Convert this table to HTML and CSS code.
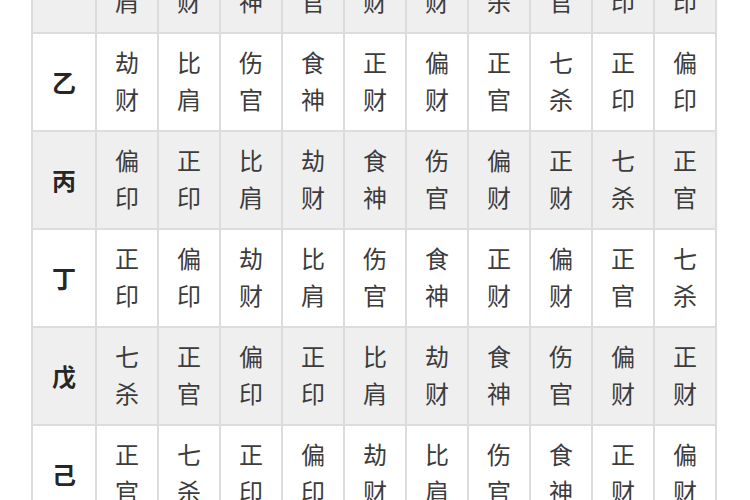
FILE: index.html
```html
<!DOCTYPE html>
<html lang="zh-CN">
<head>
<meta charset="utf-8">
<title>十神表</title>
<link rel="stylesheet" href="styles.css">
</head>
<body>
<div class="page">
  <div class="grid">
    <div class="cell stem shade">甲</div>
    <div class="cell shade"><span>比</span><span>肩</span></div>
    <div class="cell shade"><span>劫</span><span>财</span></div>
    <div class="cell shade"><span>食</span><span>神</span></div>
    <div class="cell shade"><span>伤</span><span>官</span></div>
    <div class="cell shade"><span>偏</span><span>财</span></div>
    <div class="cell shade"><span>正</span><span>财</span></div>
    <div class="cell shade"><span>七</span><span>杀</span></div>
    <div class="cell shade"><span>正</span><span>官</span></div>
    <div class="cell shade"><span>偏</span><span>印</span></div>
    <div class="cell shade"><span>正</span><span>印</span></div>

    <div class="cell stem">乙</div>
    <div class="cell"><span>劫</span><span>财</span></div>
    <div class="cell"><span>比</span><span>肩</span></div>
    <div class="cell"><span>伤</span><span>官</span></div>
    <div class="cell"><span>食</span><span>神</span></div>
    <div class="cell"><span>正</span><span>财</span></div>
    <div class="cell"><span>偏</span><span>财</span></div>
    <div class="cell"><span>正</span><span>官</span></div>
    <div class="cell"><span>七</span><span>杀</span></div>
    <div class="cell"><span>正</span><span>印</span></div>
    <div class="cell"><span>偏</span><span>印</span></div>

    <div class="cell stem shade">丙</div>
    <div class="cell shade"><span>偏</span><span>印</span></div>
    <div class="cell shade"><span>正</span><span>印</span></div>
    <div class="cell shade"><span>比</span><span>肩</span></div>
    <div class="cell shade"><span>劫</span><span>财</span></div>
    <div class="cell shade"><span>食</span><span>神</span></div>
    <div class="cell shade"><span>伤</span><span>官</span></div>
    <div class="cell shade"><span>偏</span><span>财</span></div>
    <div class="cell shade"><span>正</span><span>财</span></div>
    <div class="cell shade"><span>七</span><span>杀</span></div>
    <div class="cell shade"><span>正</span><span>官</span></div>

    <div class="cell stem">丁</div>
    <div class="cell"><span>正</span><span>印</span></div>
    <div class="cell"><span>偏</span><span>印</span></div>
    <div class="cell"><span>劫</span><span>财</span></div>
    <div class="cell"><span>比</span><span>肩</span></div>
    <div class="cell"><span>伤</span><span>官</span></div>
    <div class="cell"><span>食</span><span>神</span></div>
    <div class="cell"><span>正</span><span>财</span></div>
    <div class="cell"><span>偏</span><span>财</span></div>
    <div class="cell"><span>正</span><span>官</span></div>
    <div class="cell"><span>七</span><span>杀</span></div>

    <div class="cell stem shade">戊</div>
    <div class="cell shade"><span>七</span><span>杀</span></div>
    <div class="cell shade"><span>正</span><span>官</span></div>
    <div class="cell shade"><span>偏</span><span>印</span></div>
    <div class="cell shade"><span>正</span><span>印</span></div>
    <div class="cell shade"><span>比</span><span>肩</span></div>
    <div class="cell shade"><span>劫</span><span>财</span></div>
    <div class="cell shade"><span>食</span><span>神</span></div>
    <div class="cell shade"><span>伤</span><span>官</span></div>
    <div class="cell shade"><span>偏</span><span>财</span></div>
    <div class="cell shade"><span>正</span><span>财</span></div>

    <div class="cell stem">己</div>
    <div class="cell"><span>正</span><span>官</span></div>
    <div class="cell"><span>七</span><span>杀</span></div>
    <div class="cell"><span>正</span><span>印</span></div>
    <div class="cell"><span>偏</span><span>印</span></div>
    <div class="cell"><span>劫</span><span>财</span></div>
    <div class="cell"><span>比</span><span>肩</span></div>
    <div class="cell"><span>伤</span><span>官</span></div>
    <div class="cell"><span>食</span><span>神</span></div>
    <div class="cell"><span>正</span><span>财</span></div>
    <div class="cell"><span>偏</span><span>财</span></div>
  </div>
</div>
</body>
</html>
```

FILE: styles.css
```css
html, body {
  margin: 0;
  padding: 0;
  background: #ffffff;
  overflow: hidden;
}

.page {
  width: 750px;
  height: 500px;
  overflow: hidden;
  padding-left: 31px;
  box-sizing: border-box;
}

.grid {
  margin-top: -66px;
  display: grid;
  grid-template-columns: 62px repeat(10, 60px);
  grid-auto-rows: 96px;
  gap: 2px;
  padding: 2px;
  width: max-content;
  background: #dcdcdc;
  font-family: "Noto Sans CJK SC", "Noto Sans", sans-serif;
}

.cell {
  background: #ffffff;
  display: flex;
  flex-direction: column;
  align-items: center;
  justify-content: center;
  padding-bottom: 5px;
  box-sizing: border-box;
  font-size: 24px;
  line-height: 37px;
  color: #3c3c3c;
}

.cell span {
  display: block;
}

.cell.shade {
  background: #efefef;
}

.stem {
  color: #262626;
  font-weight: 700;
  font-size: 24px;
  padding-bottom: 2px;
}
```
